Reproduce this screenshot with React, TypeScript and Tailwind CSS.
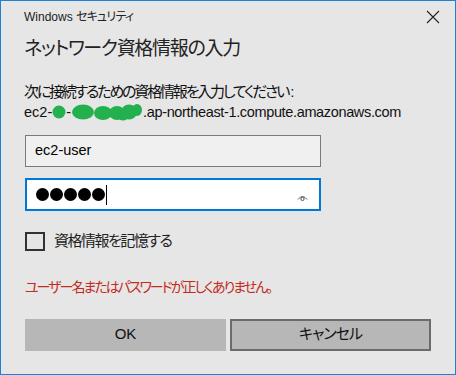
import React from 'react';

const base = "[font-family:'Liberation_Sans','Noto_Sans_CJK_JP',sans-serif] [font-feature-settings:'palt']";

const Blob = ({ w, children }: { w: number; children: React.ReactNode }) => (
  <svg width={w} height="18" viewBox={`0 0 ${w} 18`} className="inline-block align-[-4px]">
    <g fill="#22b14c">{children}</g>
  </svg>
);

export default function App() {
  return (
    <div className={`w-[456px] h-[375px] border border-[#1883d7] bg-[#e6e6e6] text-black flex flex-col pl-[23px] pr-[23px] ${base}`}>
      {/* Title bar */}
      <div className="flex items-center justify-between h-[30px] pt-[1px]">
        <span className="text-[12px] text-[#222]">
          Windows <span className="tracking-[-0.8px]">セキュリティ</span>
        </span>
        <svg width="14" height="14" viewBox="0 0 14 14" className="mr-[-8px]">
          <path d="M1 1 L13 13 M13 1 L1 13" stroke="#222" strokeWidth="1.1" />
        </svg>
      </div>

      <h1 className="text-[19px] leading-[28px] mt-[4px] text-[#222] tracking-[-1.3px]">ネットワーク資格情報の入力</h1>

      {/* Description */}
      <div className="mt-[18px] text-[15px] leading-[21px] text-[#111]">
        <p>
          <span className="tracking-[-2.2px]">次に接続するための資格情報を入力してください</span>
          <span className="ml-[2px]">:</span>
        </p>
        <p className="whitespace-nowrap text-[14.5px]">
          ec2-
          <Blob w={14}>
            <ellipse cx="7" cy="9" rx="6.5" ry="6.5" />
          </Blob>
          -
          <Blob w={72}>
            <ellipse cx="12" cy="9" rx="11" ry="7.5" />
            <ellipse cx="32" cy="10" rx="9" ry="7" />
            <ellipse cx="46" cy="10" rx="8" ry="7" />
            <ellipse cx="58" cy="9" rx="8" ry="7.5" />
            <ellipse cx="66" cy="7" rx="5" ry="6" />
            <ellipse cx="52" cy="13" rx="5" ry="4.5" />
          </Blob>
          <span className="tracking-[-0.35px]">.ap-northeast-1.compute.amazonaws.com</span>
        </p>
      </div>

      {/* Inputs */}
      <div className="mt-[12px] ml-[1px] w-[296px] h-[32px] border border-[#7a7a7a] bg-[#f0f0f0] flex items-center px-[9px] text-[14.5px]">
        ec2-user
      </div>
      <div className="mt-[11px] ml-[1px] w-[296px] h-[33px] border-2 border-[#0078d7] bg-white flex items-center pl-[9px] pr-[11px]">
        <span className="flex gap-[1px]">
          <span className="w-[13px] h-[13px] rounded-full bg-black" />
          <span className="w-[13px] h-[13px] rounded-full bg-black" />
          <span className="w-[13px] h-[13px] rounded-full bg-black" />
          <span className="w-[13px] h-[13px] rounded-full bg-black" />
          <span className="w-[13px] h-[13px] rounded-full bg-black" />
        </span>
        <span className="w-[1px] h-[20px] bg-black ml-[1px]" />
        <svg width="11" height="9" viewBox="0 0 11 9" className="ml-auto mt-[6px]">
          <path d="M1 6.5 Q5.5 0.5 10 6.5" fill="none" stroke="#555" strokeWidth="1" />
          <circle cx="5.5" cy="6" r="1.6" fill="none" stroke="#555" strokeWidth="1" />
        </svg>
      </div>

      {/* Checkbox */}
      <label className="mt-[19px] ml-[1px] flex items-center gap-[9px]">
        <span className="w-[20px] h-[19px] border-2 border-[#333] bg-[#e6e6e6]" />
        <span className="text-[15px] text-[#222] tracking-[-1.5px]">資格情報を記憶する</span>
      </label>

      <p className="mt-[24px] ml-[1px] text-[14px] text-[#c42b1c] tracking-[-2px]">ユーザー名またはパスワードが正しくありません。</p>

      {/* Buttons */}
      <div className="mt-[21px] ml-[1px] flex gap-[4px]">
        <button className="w-[201px] h-[32px] bg-[#b7b7b7] text-[15px] text-[#111]">OK</button>
        <button className="w-[201px] h-[32px] bg-[#b7b7b7] border-2 border-[#6b6b6b] text-[15px] text-[#111] tracking-[-1px]">キャンセル</button>
      </div>
    </div>
  );
}
